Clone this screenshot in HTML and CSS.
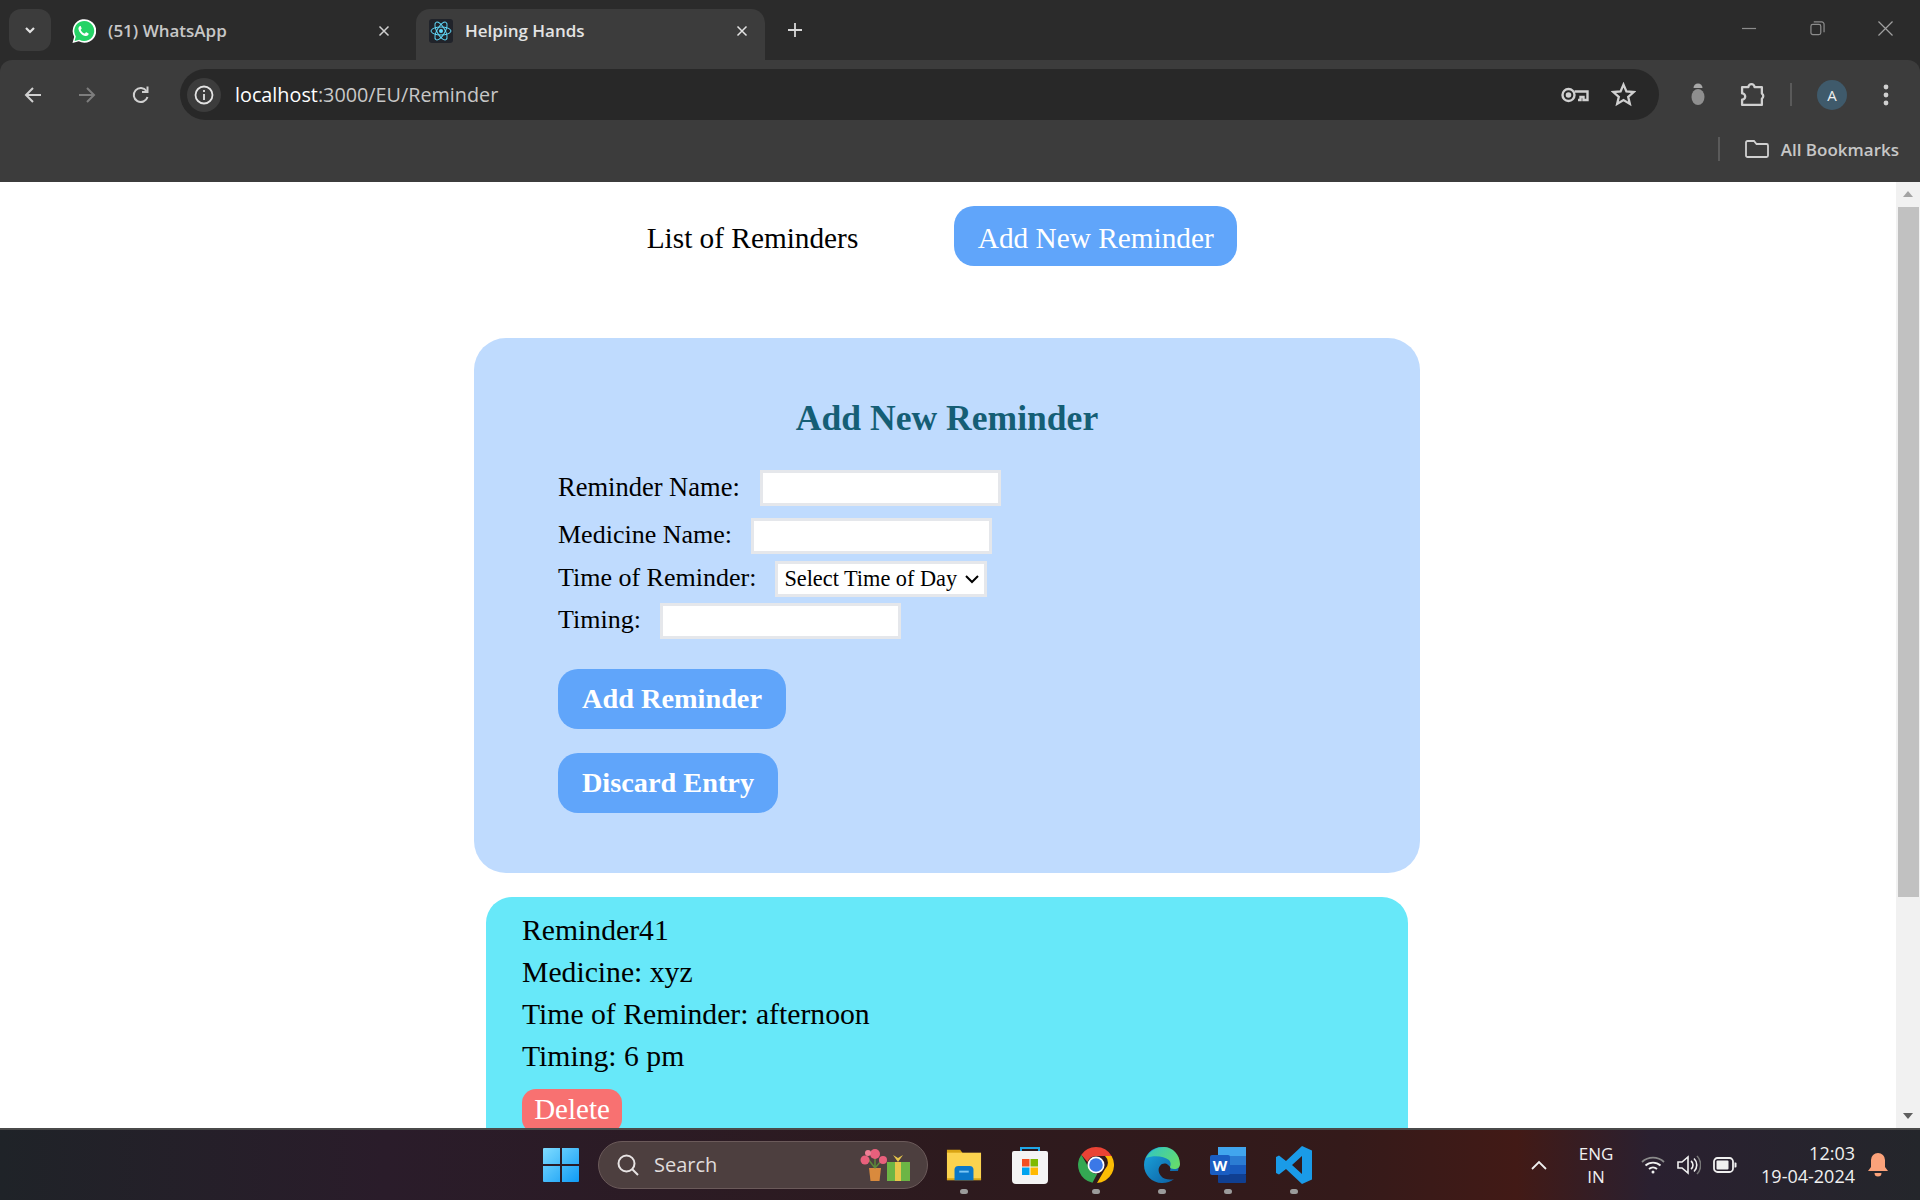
FILE: index.html
```html
<!DOCTYPE html>
<html lang="en">
<head>
    <meta charset="UTF-8">
    <title>Helping Hands</title>
    <link rel="stylesheet" href="styles.css">
</head>
<body>
    <header class="browser">
        <div class="tabstrip">
            <button class="tab-search">
                <svg width="14" height="14" viewBox="0 0 14 14"><path d="M3 5l4 4 4-4" fill="none" stroke="#e3e3e3" stroke-width="2.200"/></svg>
            </button>
            <div class="tab">
                <svg class="favicon" viewBox="0 0 24 24">
                    <path d="M.5 24l1.700-6.200A11.800 11.800 0 1 1 6.800 22.300z" fill="#fff"/>
                    <path d="M2.600 21.900l1.200-4.500A10 10 0 1 1 7.300 20.700z" fill="#25d366"/>
                    <path d="M8.700 6.800c-.5 0-1 .2-1.400.7-.7.800-1 1.800-.8 2.800.3 1.500 1.200 2.900 2.400 4.100 1.300 1.300 2.800 2.200 4.500 2.500 1.100.2 2.100-.2 2.800-1 .4-.5.500-1 .4-1.500l-2.200-1.100c-.3-.1-.5 0-.7.200l-.7.900c-.2.200-.4.200-.6.100-1.600-.7-2.800-1.800-3.600-3.300-.1-.2-.1-.4.100-.6l.6-.7c.1-.2.200-.4.100-.6l-.9-2.200c-.1-.2-.3-.3-.4-.3z" fill="#fff"/>
                </svg>
                <span class="tab-title">(51) WhatsApp</span>
                <svg class="tab-close" viewBox="0 0 12 12"><path d="M1.500 1.500l9 9M10.500 1.500l-9 9" stroke="#d0d0d0" stroke-width="1.500"/></svg>
            </div>
            <div class="tab tab-active">
                <svg class="favicon" viewBox="0 0 24 24">
                    <rect width="24" height="24" rx="3" fill="#20232a"/>
                    <circle cx="12" cy="12" r="2" fill="#61dafb"/>
                    <g fill="none" stroke="#61dafb" stroke-width="1">
                        <ellipse cx="12" cy="12" rx="10" ry="4"/>
                        <ellipse cx="12" cy="12" rx="10" ry="4" transform="rotate(60 12 12)"/>
                        <ellipse cx="12" cy="12" rx="10" ry="4" transform="rotate(120 12 12)"/>
                    </g>
                </svg>
                <span class="tab-title">Helping Hands</span>
                <svg class="tab-close" viewBox="0 0 12 12"><path d="M1.500 1.500l9 9M10.500 1.500l-9 9" stroke="#e3e3e3" stroke-width="1.500"/></svg>
            </div>
            <svg class="new-tab" viewBox="0 0 16 16"><path d="M8 1v14M1 8h14" stroke="#d8d8d8" stroke-width="1.800"/></svg>
            <div class="window-controls">
                <svg viewBox="0 0 16 16"><path d="M0 8h15" stroke="#8c8c8c" stroke-width="1.300"/></svg>
                <svg viewBox="0 0 16 16" fill="none" stroke="#8c8c8c" stroke-width="1.300"><rect x="1" y="3.500" width="10.500" height="11" rx="2"/><path d="M4 1h8.500a2.500 2.500 0 0 1 2.500 2.500V12"/></svg>
                <svg viewBox="0 0 16 16"><path d="M.5.500l15 15M15.500.500l-15 15" stroke="#a0a0a0" stroke-width="1.300"/></svg>
            </div>
        </div>
        <div class="toolbar">
            <div class="nav-row">
                <svg class="nav-icon" viewBox="0 0 20 20" fill="none" stroke="#d0d0d0" stroke-width="2"><path d="M18 10H3M10 3l-7 7 7 7"/></svg>
                <svg class="nav-icon" viewBox="0 0 20 20" fill="none" stroke="#7d7d7d" stroke-width="2"><path d="M2 10h15M10 3l7 7-7 7"/></svg>
                <svg class="nav-icon" viewBox="0 0 20 20" fill="none" stroke="#d0d0d0" stroke-width="2"><path d="M16.500 12a7 7 0 1 1-1-6"/><path d="M16.500 1.500v5.500h-5.500" /></svg>
                <div class="omnibox">
                    <span class="site-info">
                        <svg width="20" height="20" viewBox="0 0 20 20" fill="none" stroke="#e3e3e3" stroke-width="1.800"><circle cx="10" cy="10" r="8.500"/><path d="M10 9v6M10 5v2"/></svg>
                    </span>
                    <span class="url"><span class="url-host">localhost</span>:3000/EU/Reminder</span>
                    <svg class="key-icon" viewBox="0 0 28 16" fill="none" stroke="#d0d0d0" stroke-width="2.400"><circle cx="7.500" cy="8" r="6"/><circle cx="7.500" cy="8" r="1.600" fill="#d0d0d0"/><path d="M13.500 4.500h13v8.500h-4v-3h-3v3h-2.500"/></svg>
                    <svg class="star-icon" viewBox="0 0 24 24" fill="none" stroke="#d0d0d0" stroke-width="2.200"><path d="M12 2.500l2.800 6.500 7 .6-5.300 4.600 1.600 6.900-6.100-3.700-6.100 3.700 1.600-6.900-5.300-4.600 7-.6z"/></svg>
                </div>
                <svg class="bug-icon" viewBox="0 0 18 26"><path d="M4.500 6a4.500 4.500 0 0 1 9 0z" fill="#a8a8a8"/><ellipse cx="9" cy="15" rx="6.500" ry="8" fill="#8f8f8f"/></svg>
                <svg class="puzzle-icon" viewBox="0 0 24 24" fill="none" stroke="#d0d0d0" stroke-width="2.200"><path d="M2 5h6a3 3 0 0 1 6 0h7v6a3 3 0 0 1 0 5v6H2v-5a3 3 0 0 0 0-6z" stroke-linejoin="round"/></svg>
                <span class="tool-divider"></span>
                <span class="avatar">A</span>
                <svg class="kebab" viewBox="0 0 6 24" fill="#d0d0d0"><circle cx="3" cy="4" r="2.400"/><circle cx="3" cy="12" r="2.400"/><circle cx="3" cy="20" r="2.400"/></svg>
            </div>
            <div class="bookmarks-row">
                <span class="bookmarks-divider"></span>
                <svg class="folder-icon" viewBox="0 0 24 18" fill="none" stroke="#d0d0d0" stroke-width="1.800"><path d="M1 2.500A1.500 1.500 0 0 1 2.500 1H9l2.500 3h10A1.500 1.500 0 0 1 23 5.500v10a1.500 1.500 0 0 1-1.500 1.500h-19A1.500 1.500 0 0 1 1 15.500z"/></svg>
                <span class="bookmarks-label">All Bookmarks</span>
            </div>
        </div>
    </header>

    <div class="viewport">
        <main class="page">
            <nav class="page-nav">
                <span class="nav-text">List of Reminders</span>
                <button class="btn btn-nav">Add New Reminder</button>
            </nav>

            <form class="reminder-form">
                <h2 class="form-title">Add New Reminder</h2>
                <div class="field field-name">
                    <label for="reminderName">Reminder Name:</label>
                    <input type="text" id="reminderName">
                </div>
                <div class="field field-medicine">
                    <label for="medicineName">Medicine Name:</label>
                    <input type="text" id="medicineName">
                </div>
                <div class="field field-time">
                    <label for="timeOfDay">Time of Reminder:</label>
                    <select id="timeOfDay">
                        <option>Select Time of Day</option>
                    </select>
                </div>
                <div class="field field-timing">
                    <label for="timing">Timing:</label>
                    <input type="text" id="timing">
                </div>
                <button type="button" class="btn btn-form btn-add">Add Reminder</button>
                <button type="button" class="btn btn-form btn-discard">Discard Entry</button>
            </form>

            <section class="reminder-card">
                <p>Reminder41</p>
                <p>Medicine: xyz</p>
                <p>Time of Reminder: afternoon</p>
                <p>Timing: 6 pm</p>
                <button class="btn-delete">Delete</button>
            </section>
        </main>
        <div class="scrollbar">
            <span class="arrow-up"></span>
            <span class="thumb"></span>
            <span class="arrow-down"></span>
        </div>
    </div>

    <footer class="taskbar">
        <svg class="win-logo" viewBox="0 0 36 36">
            <defs><linearGradient id="winBlue" x1="0" y1="0" x2="1" y2="1"><stop offset="0" stop-color="#7fdcff"/><stop offset="1" stop-color="#0f9bf5"/></linearGradient></defs>
            <path d="M1 1h16v16H0V2a1 1 0 0 1 1-1zM19 1h16a1 1 0 0 1 1 1v15H19zM0 19h17v16H1a1 1 0 0 1-1-1zM19 19h17v15a1 1 0 0 1-1 1H19z" fill="url(#winBlue)"/>
        </svg>
        <div class="search-box">
            <svg class="search-icon" viewBox="0 0 22 22" fill="none" stroke="#e8e4e4" stroke-width="2"><circle cx="9.500" cy="9.500" r="8"/><path d="M15 15l6 6"/></svg>
            <span class="search-text">Search</span>
            <svg class="search-art" viewBox="0 0 50 32">
                <path d="M9 19h12l-1.500 13h-9z" fill="#d98a3d"/>
                <path d="M15 19l-7-9M15 19V8M15 19l7-8" stroke="#5c8a3a" stroke-width="1.500"/>
                <circle cx="5" cy="11" r="4.500" fill="#e8607c"/><circle cx="15" cy="5" r="5" fill="#e8607c"/><circle cx="23" cy="11" r="4" fill="#e8607c"/><circle cx="8" cy="4" r="3" fill="#ef7f95"/>
                <rect x="27" y="13" width="23" height="19" fill="#6cb545"/>
                <rect x="35" y="13" width="6" height="19" fill="#e8c64a"/>
                <path d="M38 13l-5-7 5 3 5-3z" fill="#e8c64a"/>
            </svg>
        </div>
        <div class="app-icons">
            <span class="app running">
                <svg viewBox="0 0 38 38"><path d="M1 3h14l3 4h-17z" fill="#d9a514"/><rect x="1" y="6" width="36" height="29" fill="#fbd34f"/><rect x="1" y="33" width="36" height="2" fill="#d9a514"/><path d="M9 24a4 4 0 0 1 4-4h12a4 4 0 0 1 4 4v11H9z" fill="#0b78c9"/><rect x="14" y="25" width="10" height="2" fill="#7cc7f5"/></svg>
            </span>
            <span class="app">
                <svg viewBox="0 0 36 38"><path d="M9 6V2h18v4" fill="none" stroke="#1fa7e8" stroke-width="2"/><path d="M0 7a2 2 0 0 1 2-2h32a2 2 0 0 1 2 2v27a4 4 0 0 1-4 4H4a4 4 0 0 1-4-4z" fill="#f4f4f4"/><rect x="10" y="13" width="7.500" height="7.500" fill="#f25022"/><rect x="18.500" y="13" width="7.500" height="7.500" fill="#7fba00"/><rect x="10" y="21.500" width="7.500" height="7.500" fill="#00a4ef"/><rect x="18.500" y="21.500" width="7.500" height="7.500" fill="#ffb900"/></svg>
            </span>
            <span class="app running">
                <svg viewBox="0 0 36 36"><path d="M18 0a18 18 0 0 1 15.600 9H18a9 9 0 0 0-8.500 6L3.300 7.700A18 18 0 0 1 18 0z" fill="#ea4335"/><path d="M33.600 9A18 18 0 0 1 19 36l7.800-13.500A9 9 0 0 0 27 9z" fill="#fbbc04"/><path d="M3.300 7.700l7.800 13.500a9 9 0 0 0 8 5.800L14.500 35.700A18 18 0 0 1 3.300 7.700z" fill="#34a853"/><circle cx="18" cy="18" r="8.500" fill="#fff"/><circle cx="18" cy="18" r="6.800" fill="#3b78e7"/></svg>
            </span>
            <span class="app running">
                <svg viewBox="0 0 36 36"><defs><linearGradient id="edgeA" x1="0" y1="0" x2="1" y2="1"><stop offset="0" stop-color="#1ba9e0"/><stop offset="1" stop-color="#0c5a9e"/></linearGradient><linearGradient id="edgeB" x1="0" y1="0" x2="1" y2=".6"><stop offset="0" stop-color="#2fc4c8"/><stop offset="1" stop-color="#63db6f"/></linearGradient></defs><path d="M18 0C8 0 0 8 0 18c0 10 8 18 18 18 5 0 9-1.500 12-4-3 1-10 1-13-3-3-3-3-8-1-10 2-3 6-3 8-1 2 1 3 3 2 6h8c3-11-5-24-16-24z" fill="url(#edgeA)"/><path d="M2 11C6 3 14 0 20 0c9 0 16 8 16 17 0 3-2 5-6 5-2 0-4-1-4-2 1-2 1-5-1-7-5-4-15-5-23-2z" fill="url(#edgeB)"/></svg>
            </span>
            <span class="app running">
                <svg viewBox="0 0 36 36"><rect x="8" y="0" width="28" height="9" fill="#41a5ee"/><rect x="8" y="9" width="28" height="9" fill="#2b7cd3"/><rect x="8" y="18" width="28" height="9" fill="#185abd"/><rect x="8" y="27" width="28" height="9" rx="1" fill="#103f91"/><rect x="0" y="8" width="20" height="20" rx="2" fill="#1a5dc2"/><text x="10" y="24" text-anchor="middle" font-family="Open Sans" font-size="15" font-weight="700" fill="#fff">W</text></svg>
            </span>
            <span class="app running">
                <svg viewBox="0 0 36 38"><path d="M26 0l10 4.500v29L26 38 10 23 3 28.500 0 27V11l3-1.500L10 15zM26 10l-10 9 10 9z" fill="#1a9be8"/></svg>
            </span>
        </div>
        <div class="tray">
            <svg class="tray-caret" viewBox="0 0 16 10" fill="none" stroke="#f0f0f0" stroke-width="1.800"><path d="M1 9l7-7 7 7"/></svg>
            <div class="tray-lang"><span>ENG</span><span>IN</span></div>
            <svg class="tray-wifi" viewBox="0 0 24 18" fill="none" stroke="#f0f0f0" stroke-width="1.800"><path d="M1 6a16 16 0 0 1 22 0" stroke="#8a8a8a"/><path d="M4.500 9.500a11 11 0 0 1 15 0M8 13a6 6 0 0 1 8 0"/><circle cx="12" cy="16" r="1.500" fill="#f0f0f0" stroke="none"/></svg>
            <svg class="tray-sound" viewBox="0 0 24 20" fill="none" stroke="#f0f0f0" stroke-width="1.600"><path d="M1 7h4l6-5v16l-6-5H1z"/><path d="M14 6a5 5 0 0 1 0 8M17 3.500a9 9 0 0 1 0 13"/><path d="M20 1a13 13 0 0 1 0 18" stroke="#777"/></svg>
            <svg class="tray-battery" viewBox="0 0 24 16"><rect x="1" y="1" width="19" height="14" rx="3.500" fill="none" stroke="#f0f0f0" stroke-width="1.800"/><rect x="3.500" y="3.500" width="12" height="9" rx="1" fill="#f0f0f0"/><path d="M21.500 5.500h1a1 1 0 0 1 1 1v3a1 1 0 0 1-1 1h-1z" fill="#f0f0f0"/></svg>
            <div class="tray-clock"><span>12:03</span><span>19-04-2024</span></div>
            <svg class="tray-bell" viewBox="0 0 20 24" fill="#fba27a"><path d="M10 0a7 7 0 0 1 7 7v7l3 4H0l3-4V7a7 7 0 0 1 7-7zM6.500 20h7a3.500 3.500 0 0 1-7 0z"/></svg>
        </div>
    </footer>
</body>
</html>
```

FILE: styles.css
```css
html,
body {
    margin: 0;
    padding: 0;
    height: 100%;
    overflow: hidden;
}

body {
    display: flex;
    flex-direction: column;
    height: 1200px;
    font-family: "Open Sans", "Noto Sans", sans-serif;
}

/* browser chrome */
.browser {
    height: 182px;
    flex: none;
    background-color: #2b2b2b;
}

.tabstrip {
    height: 60px;
    display: flex;
    align-items: flex-start;
    padding-left: 9px;
    box-sizing: border-box;
}

.tab-search {
    width: 42px;
    height: 42px;
    margin-top: 9px;
    padding: 0;
    border: none;
    border-radius: 12px;
    background-color: #3c3c3c;
    display: flex;
    align-items: center;
    justify-content: center;
}

.tab {
    width: 349px;
    height: 51px;
    margin-top: 9px;
    box-sizing: border-box;
    display: flex;
    align-items: center;
    padding: 0 17px 8px 13px;
    color: #c7c7c7;
    font-size: 17px;
}

.tab:nth-child(2) {
    width: 365px;
    padding-left: 21px;
    padding-right: 26px;
}

.tab-active {
    background-color: #3c3c3c;
    border-radius: 14px 14px 0 0;
    color: #e3e3e3;
}

.favicon {
    width: 24px;
    height: 24px;
    flex: none;
    margin-right: 12px;
}

.tab-title {
    flex: 1;
    font-weight: 600;
    margin-top: -1px;
}

.tab-close {
    width: 12px;
    height: 12px;
    margin-top: 1px;
}

.new-tab {
    width: 16px;
    height: 16px;
    margin: 22px 0 0 22px;
}

.window-controls {
    margin-left: auto;
    padding: 21px 27px 0 0;
    display: flex;
    gap: 53px;
}

.window-controls svg {
    width: 15px;
    height: 15px;
}

.toolbar {
    height: 122px;
    background-color: #3c3c3c;
    border-radius: 12px 12px 0 0;
}

.nav-row {
    height: 69px;
    display: flex;
    align-items: center;
    padding-left: 23px;
    box-sizing: border-box;
}

.nav-icon {
    width: 20px;
    height: 20px;
    flex: none;
    margin-right: 34px;
}

.omnibox {
    width: 1479px;
    height: 51px;
    margin-left: -5px;
    flex: none;
    box-sizing: border-box;
    background-color: #282828;
    border-radius: 26px;
    display: flex;
    align-items: center;
    padding: 0 23px 0 7px;
}

.site-info {
    width: 34px;
    height: 34px;
    border-radius: 50%;
    background-color: #3c3c3c;
    display: flex;
    align-items: center;
    justify-content: center;
}

.url {
    flex: 1;
    margin-left: 14px;
    font-size: 19.800px;
    color: #c7c7c7;
}

.url-host {
    color: #ffffff;
}

.key-icon {
    width: 28px;
    height: 16px;
    margin-right: 22px;
}

.star-icon {
    width: 25px;
    height: 25px;
}

.bug-icon {
    width: 18px;
    height: 26px;
    margin-left: 30px;
}

.puzzle-icon {
    width: 25px;
    height: 25px;
    margin-left: 33px;
}

.tool-divider {
    width: 2px;
    height: 23px;
    margin-left: 25px;
    background-color: #5a5a5a;
}

.avatar {
    width: 30px;
    height: 30px;
    margin-left: 25px;
    border-radius: 50%;
    background-color: #3f5a6b;
    color: #f0f0f0;
    font-size: 15px;
    display: flex;
    align-items: center;
    justify-content: center;
}

.kebab {
    width: 6px;
    height: 24px;
    margin-left: 36px;
}

.bookmarks-row {
    height: 53px;
    display: flex;
    align-items: center;
    justify-content: flex-end;
    padding: 0 21px 13px 0;
    box-sizing: border-box;
}

.bookmarks-divider {
    width: 2px;
    height: 24px;
    margin-right: 25px;
    background-color: #5a5a5a;
}

.folder-icon {
    width: 24px;
    height: 18px;
    margin-right: 12px;
}

.bookmarks-label {
    color: #c7c7c7;
    font-size: 17px;
    font-weight: 600;
}

/* page */
.viewport {
    flex: 1;
    min-height: 0;
    display: flex;
    background-color: #ffffff;
    overflow: hidden;
}

.page {
    flex: 1;
    min-width: 0;
    padding-right: 2px;
    font-family: "Liberation Serif", "Times New Roman", serif;
    overflow: hidden;
}

.page-nav {
    display: flex;
    align-items: center;
    justify-content: center;
    gap: 96px;
    margin-top: 24px;
    padding-right: 10px;
}

.nav-text {
    font-size: 29.300px;
    color: #000000;
    padding-top: 5px;
}

.btn {
    border: none;
    background-color: #60a5fa;
    color: #ffffff;
    font-family: inherit;
    padding: 0;
}

.btn-nav {
    width: 283px;
    height: 60px;
    padding-top: 5px;
    border-radius: 20px;
    font-size: 29.300px;
}

.reminder-form {
    width: 946px;
    height: 535px;
    margin: 72px auto 0;
    padding: 62px 84px 0;
    box-sizing: border-box;
    background-color: #bfdbfe;
    border-radius: 32px;
}

.form-title {
    margin: 0 0 34px;
    height: 36px;
    line-height: 36px;
    text-align: center;
    color: #155e75;
    font-size: 35.600px;
    font-weight: bold;
}

.field {
    display: flex;
    align-items: center;
    font-size: 26px;
}

.field label {
    margin: -2px 19px 0 0;
}

.field-name label {
    font-size: 26.500px;
    margin-right: 20px;
}

.field input {
    width: 241px;
    height: 36px;
    padding: 0;
    box-sizing: border-box;
    border: 3px solid #e5e7eb;
    background-color: #ffffff;
}

.field select {
    width: 212px;
    height: 36px;
    box-sizing: border-box;
    border: 3px solid #e5e7eb;
    background: #ffffff url("data:image/svg+xml,%3Csvg xmlns='http://www.w3.org/2000/svg' width='14' height='9'%3E%3Cpath d='M1 1l6 6 6-6' fill='none' stroke='%23000' stroke-width='2'/%3E%3C/svg%3E") no-repeat right 5px center;
    appearance: none;
    color: #000000;
    font-family: inherit;
    font-size: 22.300px;
    padding: 0 0 2px 6px;
    border-radius: 0;
}

.field-medicine {
    margin-top: 12px;
}

.field-time {
    margin-top: 7px;
}

.field-timing {
    margin-top: 6px;
}

.btn-form {
    display: block;
    height: 60px;
    border-radius: 20px;
    font-size: 28.300px;
    font-weight: bold;
}

.btn-add {
    width: 228px;
    margin-top: 30px;
}

.btn-discard {
    width: 220px;
    margin-top: 24px;
}

.reminder-card {
    width: 922px;
    height: 300px;
    margin: 24px auto 0;
    padding: 12px 36px 0;
    box-sizing: border-box;
    background-color: #67e8f9;
    border-radius: 26px;
    font-size: 29.700px;
}

.reminder-card p {
    margin: 0;
    line-height: 42px;
}

.btn-delete {
    width: 100px;
    height: 44px;
    margin-top: 12px;
    padding: 0 0 3px;
    border: none;
    border-radius: 14px;
    background-color: #f87171;
    color: #ffffff;
    font-family: inherit;
    font-size: 29px;
}

.scrollbar {
    width: 24px;
    flex: none;
    background-color: #f1f1f1;
    display: flex;
    flex-direction: column;
    align-items: center;
}

.arrow-up,
.arrow-down {
    width: 0;
    height: 0;
    border-left: 5px solid transparent;
    border-right: 5px solid transparent;
}

.arrow-up {
    margin-top: 9px;
    border-bottom: 6px solid #a3a3a3;
}

.thumb {
    width: 21px;
    height: 690px;
    margin-top: 10px;
    background-color: #c1c1c1;
}

.arrow-down {
    margin-top: auto;
    margin-bottom: 9px;
    border-top: 6px solid #5f5f5f;
}

/* windows taskbar */
.taskbar {
    height: 72px;
    flex: none;
    box-sizing: border-box;
    border-top: 2px solid #4a4a4a;
    background: linear-gradient(90deg, #1f2328 0%, #2a1c2a 20%, #2d1a1e 50%, #341a1a 70%, #421a16 79%, #2a2030 86%, #24262b 100%);
    display: flex;
    align-items: center;
    padding-left: 543px;
}

.win-logo {
    width: 36px;
    height: 36px;
    flex: none;
}

.search-box {
    width: 330px;
    height: 48px;
    margin-left: 19px;
    box-sizing: border-box;
    flex: none;
    border-radius: 24px;
    border: 1px solid #6b5a5a;
    background-color: #4d3f3f;
    display: flex;
    align-items: center;
    padding: 0 17px 0 18px;
}

.search-icon {
    width: 22px;
    height: 22px;
}

.search-text {
    flex: 1;
    margin: -2px 0 0 15px;
    color: #e0dcdc;
    font-size: 20px;
}

.search-art {
    width: 50px;
    height: 32px;
}

.app-icons {
    display: flex;
    margin-left: 3px;
    flex: none;
}

.app {
    width: 66px;
    height: 70px;
    display: flex;
    align-items: center;
    justify-content: center;
    position: relative;
}

.app svg {
    width: 36px;
    height: 38px;
}

.app.running::after {
    content: "";
    position: absolute;
    bottom: 6px;
    left: 29px;
    width: 8px;
    height: 5px;
    border-radius: 3px;
    background-color: #9b9b9b;
}

.tray {
    margin-left: auto;
    height: 100%;
    display: flex;
    align-items: center;
    color: #f0f0f0;
    font-size: 17px;
    padding-right: 32px;
}

.tray-caret {
    width: 16px;
    height: 10px;
}

.tray-lang {
    width: 50px;
    margin-left: 24px;
    display: flex;
    flex-direction: column;
    align-items: center;
    line-height: 23px;
}

.tray-wifi {
    width: 24px;
    height: 18px;
    margin-left: 20px;
}

.tray-sound {
    width: 24px;
    height: 20px;
    margin-left: 12px;
}

.tray-battery {
    width: 24px;
    height: 16px;
    margin-left: 12px;
}

.tray-clock {
    width: 100px;
    margin-left: 18px;
    display: flex;
    flex-direction: column;
    align-items: flex-end;
    font-size: 18px;
    line-height: 23px;
}

.tray-bell {
    width: 20px;
    height: 24px;
    margin-left: 13px;
}
```
